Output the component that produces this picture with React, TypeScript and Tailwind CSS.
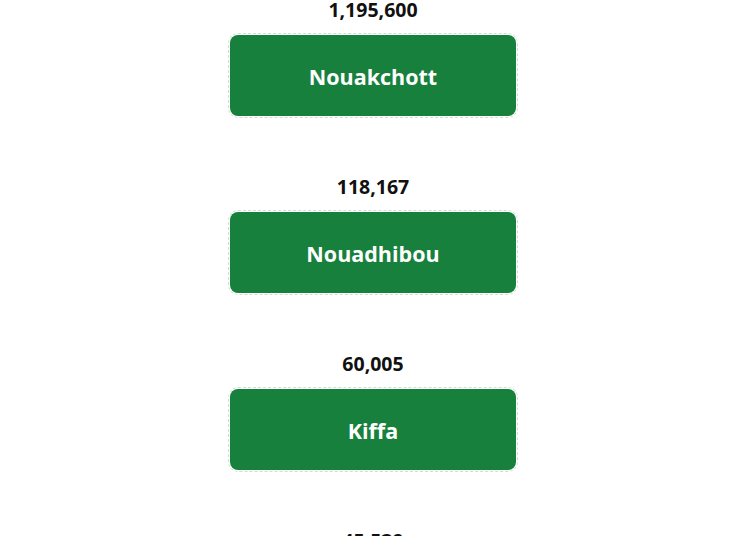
import React from 'react';

const cities = [
  { name: 'Nouakchott', population: '1,195,600' },
  { name: 'Nouadhibou', population: '118,167' },
  { name: 'Kiffa', population: '60,005' },
  { name: 'Kaédi', population: '45,539' },
];

const App: React.FC = () => {
  return (
    <div className="min-h-screen bg-white pr-[4px] font-['Open_Sans',sans-serif]">
      <div className="flex flex-col items-center">
        {cities.map((c) => (
          <div key={c.name} className="flex flex-col items-center mb-[61px]">
            <div className="text-[19.5px] leading-[20px] font-bold text-[#111]">{c.population}</div>
            <button className="mt-[15px] w-[286px] h-[81px] pt-[3px] rounded-[8px] bg-[#17803d] text-white text-[21.5px] font-bold outline outline-1 outline-dashed outline-[#c9e3d0] outline-offset-[1px]">
              {c.name}
            </button>
          </div>
        ))}
      </div>
    </div>
  );
};

export default App;
